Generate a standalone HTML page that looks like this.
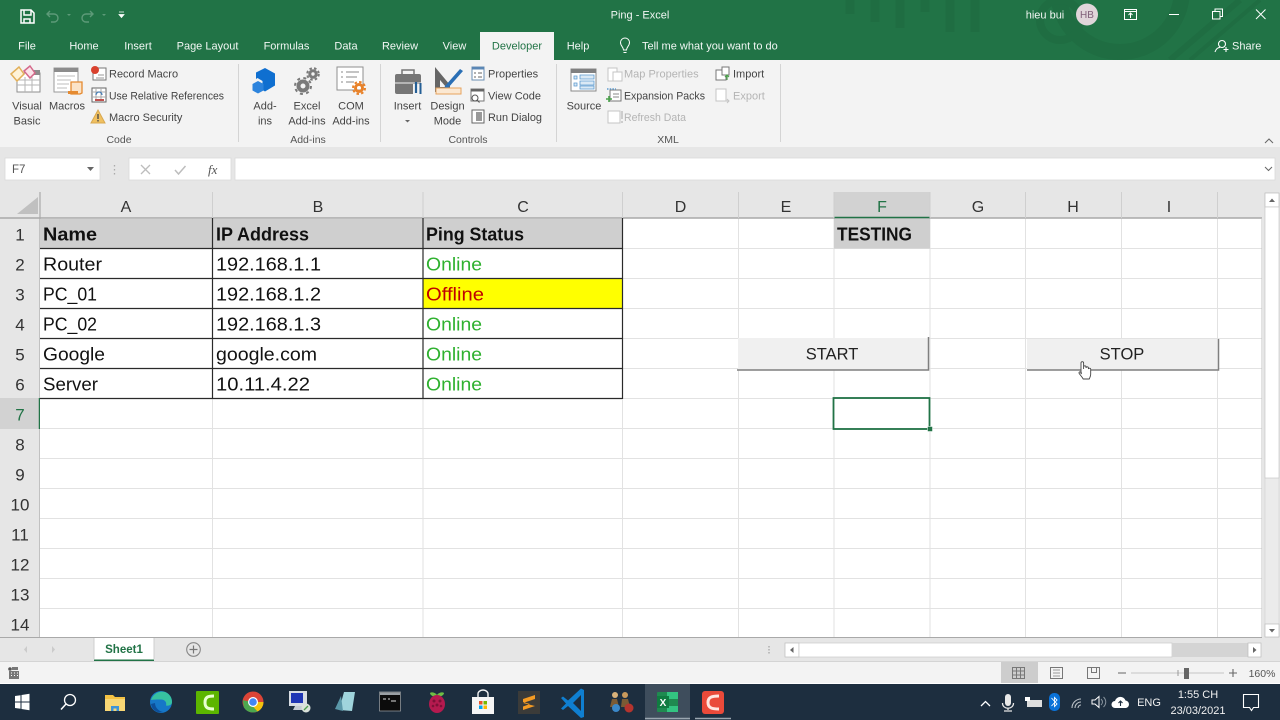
<!DOCTYPE html>
<html><head><meta charset="utf-8"><title>Ping - Excel</title>
<style>
html,body{margin:0;padding:0;width:1280px;height:720px;overflow:hidden;background:#fff}
svg{display:block;font-family:"Liberation Sans",sans-serif}
.r{font-size:11px;fill:#444}
.d{font-size:11px;fill:#b4b4b4}
.w{font-size:11px;fill:#f2f7f4}
.m{text-anchor:middle}
.g{font-size:10.5px;fill:#555;text-anchor:middle}
.h{font-size:16px;fill:#333;text-anchor:middle}
.n{font-size:17px;fill:#333;text-anchor:middle}
.c{font-size:18px;fill:#111}
.b{font-weight:bold}
.on{fill:#2fb12f}
.l{stroke:#e2e2e2;stroke-width:1}
.k{stroke:#2a2a2a;stroke-width:1.200}
</style></head><body>
<svg width="1280" height="720" viewBox="0 0 1280 720" xmlns="http://www.w3.org/2000/svg">
<!-- title bar -->
<rect width="1280" height="60" fill="#217346"/>
<g fill="none" stroke="#1f6d42" stroke-width="16">
<circle cx="1120" cy="-10" r="62"/><circle cx="1060" cy="20" r="20" stroke-width="8"/>
<path d="M850 0v14M875 0v22M900 0v28M925 0v12M950 0v32M975 0v32" stroke-width="9"/>
<path d="M1170 60L1240 0" stroke-width="6"/><path d="M1190 60L1260 0" stroke-width="4"/>
</g>
<!-- qat -->
<g fill="none" stroke="#fff" stroke-width="1.500"><path d="M21 10h10l3 3v10H21z"/><path d="M24 10v5h7v-5M24 23v-4h6v4"/></g>
<g fill="none" stroke="#5d9a78" stroke-width="1.400"><path d="M50 11l-3 3 3 3M47 14h7a4 4 0 0 1 0 8h-3"/><path d="M90 11l3 3-3 3M93 14h-7a4 4 0 0 0 0 8h3"/></g>
<path d="M67 14h4l-2 2zM102 14h4l-2 2z" fill="#5d9a78"/>
<path d="M119 12h5M119 14.500h5l-2.500 3z" fill="#fff" stroke="#fff" stroke-width=".8"/>
<text x="640" y="18.500" class="w m">Ping  -  Excel</text>
<text x="1045" y="18.500" class="w m">hieu bui</text>
<circle cx="1087" cy="14.500" r="11" fill="#e0d6da"/><text x="1087" y="18" font-size="10" fill="#80607a" text-anchor="middle">HB</text>
<g fill="none" stroke="#fff" stroke-width="1"><path d="M1124.500 9.500h12v10h-12zM1124.500 11.500h12M1130.500 18v-5M1128.500 15l2-2 2 2"/><path d="M1169 14.500h10"/><path d="M1212.500 11.500h7.500v7.500h-7.500zM1215 11.500v-2.500h7.500v7.500h-2.500"/><path d="M1256 9.500l9.500 9.500M1265.500 9.500l-9.500 9.500"/></g>
<!-- tabs -->
<rect x="480" y="32" width="74" height="28" fill="#f3f3f3"/>
<text x="27" y="49.500" class="w m">File</text><text x="84" y="49.500" class="w m">Home</text><text x="138" y="49.500" class="w m">Insert</text><text x="207.500" y="49.500" class="w m">Page Layout</text><text x="286.500" y="49.500" class="w m">Formulas</text><text x="346" y="49.500" class="w m">Data</text><text x="400" y="49.500" class="w m">Review</text><text x="454.500" y="49.500" class="w m">View</text>
<text x="517" y="49.500" class="m" font-size="11" fill="#217346">Developer</text>
<text x="578" y="49.500" class="w m">Help</text>
<path d="M623.500 50c0-3-3-4-3-7.500a4.500 4.500 0 0 1 9 0c0 3.500-3 4.500-3 7.500zM623.500 52.500h3" fill="none" stroke="#fff"/>
<text x="642" y="49.500" class="w">Tell me what you want to do</text>
<g fill="none" stroke="#fff" stroke-width="1.100"><circle cx="1222" cy="44" r="3.500"/><path d="M1215 52c1-3 3-4.500 5-4.500M1226 47v5M1223.500 49.500h5"/></g>
<text x="1232" y="49.500" class="w">Share</text>
<!-- ribbon -->
<rect y="60" width="1280" height="87" fill="#f3f3f3"/>
<rect y="147" width="1280" height="45" fill="#e6e6e6"/>
<g stroke="#d4d4d4"><path d="M238.500 64v78M380.500 64v78M556.500 64v78M780.500 64v78"/></g>
<path d="M1265 143l4-4 4 4" fill="none" stroke="#666"/>
<!-- Visual basic -->
<rect x="17" y="73" width="23" height="19" fill="#fff" stroke="#8f8f8f"/><rect x="30" y="70" width="10" height="5" fill="#8c8c8c"/>
<path d="M17 80h23M17 85h23M25 77v15M32 77v15" stroke="#b5b5b5"/>
<path d="M19 67l5 7-7 7-6-7z" fill="#fff3d8" stroke="#e2b05a" stroke-width="1.500"/><path d="M30 66l5 7-5 5-6-7z" fill="#fbe4ea" stroke="#d4688a" stroke-width="1.500"/>
<text x="27" y="109.500" class="r m">Visual</text><text x="27" y="124.500" class="r m">Basic</text>
<!-- Macros -->
<rect x="54" y="68" width="24" height="24" fill="#fff" stroke="#9a9a9a"/><rect x="54" y="68" width="24" height="4" fill="#8c8c8c"/>
<path d="M57 76h18M57 80h14M57 84h12M57 88h10" stroke="#bdbdbd"/>
<path d="M71 82h11v11l-2 1h-9z" fill="#fbe3c8" stroke="#e58a30" stroke-width="1.300"/><path d="M68 91h10v3h-10z" fill="#e58a30"/>
<text x="67" y="109.500" class="r m">Macros</text>
<!-- Record etc -->
<rect x="93" y="68" width="13" height="12" fill="#fff" stroke="#777"/><circle cx="95" cy="70" r="4" fill="#d9412e"/><path d="M98 75h6M96 78h8" stroke="#999"/>
<text x="109" y="77.500" class="r">Record Macro</text>
<rect x="92" y="88" width="14" height="14" fill="#fff" stroke="#666"/><path d="M92 92h14M92 97h14M96 88v14M101 88v14" stroke="#aaa"/><path d="M95 100h9" stroke="#c0504d" stroke-width="2"/><path d="M96 95a3 3 0 0 1 6 0" fill="none" stroke="#4a7fb5" stroke-width="1.300"/>
<text x="109" y="99.500" class="r" textLength="115" lengthAdjust="spacingAndGlyphs">Use Relative References</text>
<path d="M98 110l7 13H91z" fill="#f0c060" stroke="#d8a850"/><path d="M98 114v5M98 120v1.500" stroke="#444" stroke-width="1.300"/>
<text x="109" y="121" class="r">Macro Security</text>
<text x="119" y="143" class="g">Code</text>
<!-- Add-ins -->
<path d="M265 68l10 5.500v12l-10 6-2.500-1.500v-9l-5-3-1.500 1v-6.500z" fill="#0f6fd0"/><path d="M258 81l5.500 3v6.500l-5.500 3-5.500-3V84z" fill="#2d84dd"/>
<text x="265" y="109.500" class="r m">Add-</text><text x="265" y="124.500" class="r m">ins</text>
<g fill="none" stroke="#7a7a7a"><circle cx="303" cy="86" r="4.500" stroke-width="4"/><circle cx="303" cy="86" r="8" stroke-width="2" stroke-dasharray="3 3.300"/><circle cx="313" cy="74" r="3.200" stroke-width="3"/><circle cx="313" cy="74" r="5.800" stroke-width="2" stroke-dasharray="2.500 2.200"/></g>
<text x="307" y="109.500" class="r m">Excel</text><text x="307" y="124.500" class="r m">Add-ins</text>
<rect x="337" y="67" width="26" height="23" fill="#fff" stroke="#8f8f8f"/><path d="M341 72h2M346 72h13M341 77h2M346 77h11M341 82h2M346 82h8" stroke="#888"/>
<circle cx="359" cy="88" r="3.500" fill="none" stroke="#e8822a" stroke-width="3"/><circle cx="359" cy="88" r="6" fill="none" stroke="#e8822a" stroke-width="2" stroke-dasharray="2.500 2.200"/>
<text x="351" y="109.500" class="r m">COM</text><text x="351" y="124.500" class="r m">Add-ins</text>
<text x="308" y="143" class="g">Add-ins</text>
<!-- Insert -->
<rect x="395" y="74" width="26" height="20" rx="2" fill="#767676"/><path d="M402 74v-4h12v4" fill="none" stroke="#767676" stroke-width="1.500"/><path d="M395 83h26" stroke="#f3f3f3"/>
<path d="M415 84v11M419 84v11" stroke="#f3f3f3" stroke-width="4"/><path d="M416 82v11" stroke="#245f96" stroke-width="2.200"/><path d="M420.500 83v11" stroke="#245f96" stroke-width="2"/>
<text x="407.500" y="109.500" class="r m">Insert</text><path d="M405 120h5l-2.500 2.500z" fill="#666"/>
<!-- Design -->
<path d="M435 67l15 18v-3 10h-15z" fill="#666"/><path d="M440 80l6 7h-6z" fill="#f3f3f3"/>
<path d="M445 86l15-17 3 2-15 17-4 1z" fill="#2a6fb5"/>
<rect x="436" y="88" width="25" height="6" fill="#fbe8d2" stroke="#e7a35e"/>
<text x="447.500" y="109.500" class="r m">Design</text><text x="447.500" y="124.500" class="r m">Mode</text>
<!-- controls small -->
<rect x="472" y="67" width="12" height="13" fill="#fff" stroke="#6b8fb3"/><rect x="472" y="67" width="12" height="2.500" fill="#5b87b5"/><path d="M474 73h2M478 73h4M474 77h2M478 77h4" stroke="#666"/>
<text x="488" y="77.500" class="r">Properties</text>
<rect x="471" y="89" width="13" height="12" fill="#fff" stroke="#777"/><rect x="471" y="89" width="13" height="2.500" fill="#666"/><circle cx="475" cy="98" r="3" fill="#fff" stroke="#555"/><path d="M477 100l2.500 2.500" stroke="#555"/>
<text x="488" y="99.500" class="r" textLength="53" lengthAdjust="spacingAndGlyphs">View Code</text>
<rect x="472" y="110" width="12" height="13" fill="#fff" stroke="#666"/><rect x="476" y="112" width="6" height="9" fill="#999"/>
<text x="488" y="121" class="r" textLength="54" lengthAdjust="spacingAndGlyphs">Run Dialog</text>
<text x="468" y="143" class="g">Controls</text>
<!-- XML -->
<rect x="571" y="69" width="25" height="22" fill="#fff" stroke="#8a8a8a"/><rect x="571" y="69" width="25" height="4" fill="#808080"/>
<path d="M574 76h3v3h-3zM574 83h3v3h-3zM580 75h14v4h-14zM580 81h14v4h-14zM580 86h14v3h-14z" fill="#dbe9f5" stroke="#5e9bcf" stroke-width=".8"/>
<text x="584" y="109.500" class="r m">Source</text>
<g stroke="#c4c4c4" fill="#fff"><rect x="608" y="68" width="9" height="13"/><rect x="613" y="72" width="9" height="9"/></g>
<text x="624" y="77.500" class="d">Map Properties</text>
<rect x="610" y="90" width="11" height="11" fill="#fff" stroke="#777"/><path d="M607 89h9" stroke="#5e9bcf" stroke-width="1.500" stroke-dasharray="1.500 1.200"/><path d="M606 99h6M609 96v6" stroke="#4aa24a" stroke-width="1.600"/><path d="M613 94h6M613 97h6" stroke="#888"/>
<text x="624" y="99.500" class="r" textLength="81" lengthAdjust="spacingAndGlyphs">Expansion Packs</text>
<rect x="608" y="111" width="12" height="12" fill="#fff" stroke="#c4c4c4"/><path d="M622 111v8M622 121v2" stroke="#c4c4c4" stroke-width="1.600"/>
<text x="624" y="121" class="d" textLength="62" lengthAdjust="spacingAndGlyphs">Refresh Data</text>
<rect x="716" y="70" width="10" height="10" fill="#fff" stroke="#777"/><rect x="722" y="67" width="7" height="8" fill="#fff" stroke="#777"/><path d="M727 80v-5M725 77l2-2 2 2" fill="none" stroke="#4aa24a" stroke-width="1.200"/>
<text x="733" y="77.500" class="r">Import</text>
<rect x="716" y="89" width="10" height="12" fill="#fff" stroke="#c4c4c4"/><path d="M724 101h5M727 99l2 2-2 2" fill="none" stroke="#c4c4c4"/>
<text x="733" y="99.500" class="d">Export</text>
<text x="668" y="143" class="g">XML</text>
<!-- formula bar -->
<rect x="5" y="158" width="95" height="22" fill="#fff" stroke="#dadada" stroke-width=".8"/>
<text x="12" y="173" font-size="11.500" fill="#555">F7</text><path d="M87 167h7l-3.500 4z" fill="#666"/>
<path d="M114.500 165v1.500M114.500 169v1.500M114.500 173v1.500" stroke="#aaa" stroke-width="1.300"/>
<rect x="129" y="158" width="102" height="22" fill="#fff" stroke="#dadada" stroke-width=".8"/>
<path d="M141 165l9 9M150 165l-9 9" stroke="#bdbdbd" stroke-width="1.300"/><path d="M175 170l3.500 4 7-8" fill="none" stroke="#bdbdbd" stroke-width="1.500"/>
<text x="208" y="174" font-family="Liberation Serif" font-style="italic" font-size="13" fill="#555">fx</text>
<rect x="235" y="158" width="1040" height="22" fill="#fff" stroke="#dadada" stroke-width=".8"/>
<path d="M1265 167l3.500 3.500 3.500-3.500" fill="none" stroke="#666"/>
<!-- headers -->
<rect x="0" y="192" width="1262" height="26" fill="#e6e6e6"/>
<rect x="0" y="218" width="40" height="420" fill="#e6e6e6"/>
<rect x="834" y="192" width="96" height="26" fill="#d2d2d2"/>
<rect x="0" y="398" width="40" height="31" fill="#d2d2d2"/>
<path d="M38 197v17H17z" fill="#c0c0c0"/>
<path d="M0 218h1262" stroke="#a9a9a9" stroke-width="1.500"/><path d="M40 192v446" stroke="#a9a9a9" stroke-width="1.200"/>
<path d="M834 217.500h96" stroke="#217346" stroke-width="1.500"/>
<path d="M39.500 398v31" stroke="#217346" stroke-width="1.500"/>
<g stroke="#cfcfcf"><path d="M212.500 192v26M423 192v26M622.500 192v26M738.500 192v26M834 192v26M930 192v26M1025.500 192v26M1121.500 192v26M1217.500 192v26"/></g>
<text x="126" y="212" class="h">A</text><text x="318" y="212" class="h">B</text><text x="523" y="212" class="h">C</text><text x="680.500" y="212" class="h">D</text><text x="786" y="212" class="h">E</text><text x="882" y="212" class="h" style="fill:#217346">F</text><text x="978" y="212" class="h">G</text><text x="1073" y="212" class="h">H</text><text x="1169" y="212" class="h">I</text>
<text x="20" y="240.500" class="n">1</text><text x="20" y="270.500" class="n">2</text><text x="20" y="300.500" class="n">3</text><text x="20" y="330.500" class="n">4</text><text x="20" y="360.500" class="n">5</text><text x="20" y="390.500" class="n">6</text><text x="20" y="420.500" class="n" style="fill:#217346">7</text><text x="20" y="450.500" class="n">8</text><text x="20" y="480.500" class="n">9</text><text x="20" y="510.500" class="n">10</text><text x="20" y="540.500" class="n">11</text><text x="20" y="570.500" class="n">12</text><text x="20" y="600.500" class="n">13</text><text x="20" y="630.500" class="n">14</text>
<!-- grid -->
<rect x="40" y="219" width="1222" height="419" fill="#fff"/>
<g class="l"><path d="M40 248.500h1222M40 278.500h1222M40 308.500h1222M40 338.500h1222M40 368.500h1222M40 398.500h1222M40 428.500h1222M40 458.500h1222M40 488.500h1222M40 518.500h1222M40 548.500h1222M40 578.500h1222M40 608.500h1222"/>
<path d="M212.500 219v419M423 219v419M622.500 219v419M738.500 219v419M834 219v419M930 219v419M1025.500 219v419M1121.500 219v419M1217.500 219v419"/></g>
<path d="M1262 218v420" stroke="#c4c4c4"/>
<rect x="40" y="219" width="582" height="29.500" fill="#cfcfcf"/>
<rect x="834" y="219" width="96" height="29.500" fill="#cfcfcf"/>
<rect x="423" y="279" width="199" height="29.500" fill="#ffff00"/>
<g class="k"><path d="M40 248.500h582M40 278.500h582M40 308.500h582M40 338.500h582M40 368.500h582M40 398.500h582M212.500 218v181M423 218v181M622.500 218v181"/></g>
<path d="M0 637.500h1262" stroke="#a9a9a9"/>
<!-- cell text -->
<g class="c">
<text x="43" y="240.500" class="b" textLength="54" lengthAdjust="spacingAndGlyphs">Name</text>
<text x="216" y="240.500" class="b" textLength="93" lengthAdjust="spacingAndGlyphs">IP Address</text>
<text x="426" y="240.500" class="b" textLength="98" lengthAdjust="spacingAndGlyphs">Ping Status</text>
<text x="43" y="270.500" textLength="59" lengthAdjust="spacingAndGlyphs">Router</text>
<text x="43" y="300.500" textLength="54" lengthAdjust="spacingAndGlyphs">PC_01</text>
<text x="43" y="330.500" textLength="54" lengthAdjust="spacingAndGlyphs">PC_02</text>
<text x="43" y="360.500" textLength="62" lengthAdjust="spacingAndGlyphs">Google</text>
<text x="43" y="390.500" textLength="55" lengthAdjust="spacingAndGlyphs">Server</text>
<text x="216" y="270.500" textLength="105" lengthAdjust="spacingAndGlyphs">192.168.1.1</text>
<text x="216" y="300.500" textLength="105" lengthAdjust="spacingAndGlyphs">192.168.1.2</text>
<text x="216" y="330.500" textLength="105" lengthAdjust="spacingAndGlyphs">192.168.1.3</text>
<text x="216" y="360.500" textLength="101" lengthAdjust="spacingAndGlyphs">google.com</text>
<text x="216" y="390.500" textLength="94" lengthAdjust="spacingAndGlyphs">10.11.4.22</text>
<text x="426" y="270.500" class="on" textLength="56" lengthAdjust="spacingAndGlyphs">Online</text>
<text x="426" y="300.500" style="fill:#c00000" textLength="58" lengthAdjust="spacingAndGlyphs">Offline</text>
<text x="426" y="330.500" class="on" textLength="56" lengthAdjust="spacingAndGlyphs">Online</text>
<text x="426" y="360.500" class="on" textLength="56" lengthAdjust="spacingAndGlyphs">Online</text>
<text x="426" y="390.500" class="on" textLength="56" lengthAdjust="spacingAndGlyphs">Online</text>
<text x="837" y="240.500" class="b" textLength="75" lengthAdjust="spacingAndGlyphs">TESTING</text>
</g>
<!-- buttons -->
<rect x="738" y="338" width="190" height="32" fill="#f0f0f0"/>
<path d="M737 370h191.500V337" fill="none" stroke="#7f7f7f" stroke-width="1.500"/>
<text x="832" y="359.500" font-size="16.500" fill="#222" text-anchor="middle">START</text>
<rect x="1027" y="339" width="191" height="31" fill="#f0f0f0"/>
<path d="M1027 370h191.500V339" fill="none" stroke="#7f7f7f" stroke-width="1.500"/>
<text x="1122" y="359.500" font-size="16.500" fill="#222" text-anchor="middle">STOP</text>
<!-- cursor -->
<path d="M1081 374v-11a1.300 1.300 0 0 1 2.600 0v6v-2a1.200 1.200 0 0 1 2.400 0v1a1.200 1.200 0 0 1 2.400 0v1a1.200 1.200 0 0 1 2.300 0v5c0 2-1 4-1.500 5h-6c-1-2-3-4-4-5.500-.800-1.500 1-2.500 2.300-.5z" fill="#fff" stroke="#444" stroke-width=".9"/>
<!-- selection -->
<rect x="833.500" y="398" width="96" height="31" fill="none" stroke="#217346" stroke-width="1.800"/>
<rect x="927.500" y="426.500" width="5" height="5" fill="#217346" stroke="#fff" stroke-width=".5"/>
<!-- v scrollbar -->
<rect x="1262" y="192" width="18" height="446" fill="#e6e6e6"/>
<rect x="1265" y="193" width="14" height="444" fill="#ebebeb" stroke="#d0d0d0" stroke-width=".6"/>
<rect x="1265" y="193" width="14" height="14" fill="#fff" stroke="#bbb" stroke-width=".7"/>
<path d="M1269 202l3-3.500 3 3.500z" fill="#666"/>
<rect x="1265" y="207" width="14" height="271" fill="#fff" stroke="#c8c8c8" stroke-width=".7"/>
<rect x="1265" y="624" width="14" height="13" fill="#fff" stroke="#bbb" stroke-width=".7"/>
<path d="M1269 629h6l-3 3.500z" fill="#666"/>
<!-- sheet tabs -->
<rect y="638" width="1280" height="24" fill="#e6e6e6"/>
<path d="M27 646v7l-3-3.500zM52 646v7l3-3.500z" fill="#cbcbcb"/>
<rect x="94" y="638" width="60" height="23" fill="#fff"/><rect x="94" y="659.500" width="60" height="2" fill="#217346"/>
<path d="M94 638v21M154 638v21" stroke="#cfcfcf"/>
<text x="124" y="653" font-size="11.500" font-weight="bold" fill="#217346" text-anchor="middle">Sheet1</text>
<circle cx="193.500" cy="649.500" r="6.800" fill="none" stroke="#888" stroke-width="1.100"/><path d="M193.500 645.500v8M189.500 649.500h8" stroke="#777" stroke-width="1.200"/>
<path d="M769 646v1.500M769 649v1.500M769 652v1.500" stroke="#aaa" stroke-width="1.400"/>
<rect x="785" y="643" width="14" height="14" fill="#fff" stroke="#bbb" stroke-width=".7"/><path d="M793.500 647v6l-3.500-3z" fill="#666"/>
<rect x="799" y="643" width="373" height="14" fill="#fff" stroke="#c8c8c8" stroke-width=".7"/>
<rect x="1172" y="643" width="76" height="14" fill="#d4d4d4"/>
<rect x="1248" y="643" width="13" height="14" fill="#fff" stroke="#bbb" stroke-width=".7"/><path d="M1253 647v6l3.500-3z" fill="#666"/>
<!-- status -->
<rect y="662" width="1280" height="21" fill="#f3f3f3"/>
<path d="M0 661.500h1280" stroke="#d4d4d4"/>
<circle cx="10" cy="669" r="1.800" fill="#555"/><rect x="9" y="671" width="10" height="8" fill="#777"/><path d="M11 673h1M14 673h1M17 673h1M11 675.500h1M14 675.500h1M17 675.500h1" stroke="#fff"/><rect x="12" y="667" width="6" height="3" fill="#777"/>
<rect x="1001" y="662" width="37" height="21" fill="#cdcdcd"/>
<g fill="none" stroke="#777"><path d="M1012.500 667.500h12v11h-12zM1016.500 667.500v11M1020.500 667.500v11M1012.500 671h12M1012.500 675h12"/>
<rect x="1050.500" y="667.500" width="12" height="11"/><path d="M1053 670h7M1053 673h7M1053 676h7" stroke="#999"/>
<path d="M1087.500 667.500h12v11h-12zM1091.500 667.500v5h5v-5"/></g>
<path d="M1118 673h8M1229 673h8M1233 669v8" stroke="#666" stroke-width="1.100"/>
<path d="M1131 673h93" stroke="#c4c4c4"/><path d="M1178 670v6" stroke="#999"/>
<rect x="1184" y="668" width="5" height="11" fill="#666"/>
<text x="1262" y="677" font-size="10.500" fill="#555" text-anchor="middle">160%</text>
<!-- taskbar -->
<rect y="684" width="1280" height="36" fill="#1d2e3f"/>
<rect x="645" y="684" width="45" height="36" fill="#3e4d5c"/>
<path d="M645 718.500h45M695 718.500h36" stroke="#9aa6b0" stroke-width="1.500"/>
<!-- start -->
<path d="M15 696l5.500-.8v6.300H15zM21.500 695l8-1.200v7.700h-8zM15 702.500h5.500v6.300L15 708zM21.500 702.500h8v7.700l-8-1.200z" fill="#fff"/>
<circle cx="70" cy="700" r="5.500" fill="none" stroke="#fff" stroke-width="1.300"/><path d="M66 704l-5 5.500" stroke="#fff" stroke-width="1.500"/>
<!-- folder -->
<path d="M105 695h8l2 2h10v14h-20z" fill="#f3c244"/><path d="M105 699h20v12h-20z" fill="#f8d775"/><path d="M111 711v-5h8v5h-2.500v-2.500h-3v2.500z" fill="#3f94d8"/>
<!-- edge -->
<circle cx="161" cy="702" r="11" fill="#1677c8"/><path d="M151 700c2-7 9-9.500 14-8 4 1.500 7 5 7 10 0 3-3 4-6 3.500 1-3-1-6-5-6-4 0-8 0-10 .5z" fill="#37c1a0"/><path d="M155 703c0 4 3 8 8 9-6 1.500-11-2-12-8z" fill="#0d4f9a"/>
<!-- camtasia -->
<rect x="196" y="691" width="23" height="23" rx="1" fill="#5cb500"/><path d="M214 696c-6 0-9 1-9 6.500s3 6.500 9 6.500" fill="none" stroke="#e8ffd0" stroke-width="3"/>
<!-- chrome -->
<circle cx="253" cy="702" r="10.500" fill="#db4437"/><path d="M253 702l9 5.200a10.500 10.500 0 0 1-18.200 0l-1-7z" fill="#4ca84f"/><path d="M253 702h10.500a10.500 10.500 0 0 1-6 9.500l-4.500-5z" fill="#f4c20d"/><circle cx="253" cy="702" r="5" fill="#fff"/><circle cx="253" cy="702" r="3.800" fill="#4285f4"/>
<!-- monitor -->
<rect x="289" y="691" width="18" height="15" fill="#d8dde3"/><rect x="291" y="693" width="12" height="10" fill="#1f36b5"/><path d="M295 706h12v4h-14z" fill="#c5ccd3"/><circle cx="306" cy="708" r="4.500" fill="#dbe2da"/><path d="M304 710l4-4" stroke="#4f9f4f" stroke-width="1.300"/>
<!-- notepad -->
<path d="M339 710l5-18h11l-3 19z" fill="#9fd4dc"/><path d="M335 709l6-13 2 15z" fill="#5a97a8"/>
<!-- cmd -->
<rect x="379.500" y="692" width="21" height="19" fill="#0c0c0c" stroke="#8f9499" stroke-width=".8"/><rect x="380" y="692.500" width="20" height="2.500" fill="#9aa0a5"/><path d="M383 699h3M388 699h2M391 701h5" stroke="#ddd"/>
<!-- raspberry -->
<path d="M437 695c-2-3-6-3-7-2 0 2 3 4 7 4 4 0 7-2 7-4-1-1-5-1-7 2z" fill="#6fbe45"/><ellipse cx="437" cy="704" rx="8" ry="9" fill="#b51a4f"/><circle cx="434" cy="701" r="1.500" fill="#7e1037"/><circle cx="440" cy="701" r="1.500" fill="#7e1037"/><circle cx="437" cy="705" r="1.500" fill="#7e1037"/><circle cx="433" cy="706" r="1.300" fill="#7e1037"/><circle cx="441" cy="706" r="1.300" fill="#7e1037"/>
<!-- store -->
<rect x="472" y="697" width="22" height="17" fill="#f5f5f5"/><path d="M478 697v-3a5 4 0 0 1 10 0v3" fill="none" stroke="#f5f5f5" stroke-width="1.400"/>
<rect x="479" y="701" width="3.500" height="3.500" fill="#e8552c"/><rect x="483.500" y="701" width="3.500" height="3.500" fill="#77b900"/><rect x="479" y="705.500" width="3.500" height="3.500" fill="#00a4ef"/><rect x="483.500" y="705.500" width="3.500" height="3.500" fill="#ffb900"/>
<!-- sublime -->
<rect x="518" y="691" width="22" height="23" fill="#3b3b39"/><path d="M523 699l12-4v4l-12 4zM523 703l12 3v0l-12 4v-3.500l7-2.500-7-2z" fill="#f59b23"/>
<!-- vscode -->
<path d="M581 691l-13 12-5-4-2 1.500 5 5.500-5 5 2 1.500 5-4 13 12 3-1v-27z" fill="#0f7fd1" transform="translate(0 -2.500)"/><path d="M581 695v16l-8-8z" fill="#1d2e3f"/>
<!-- people -->
<circle cx="615" cy="695" r="3" fill="#d9b27a"/><circle cx="625" cy="695" r="3" fill="#c99a5c"/><path d="M610 707l2-8h5l2 8zM621 707l1-8h6l2 8z" fill="#7b5b35"/><circle cx="616" cy="708" r="4" fill="#3b88c9"/><circle cx="629" cy="708" r="4.500" fill="#b5342e"/>
<!-- excel -->
<rect x="657" y="692" width="21" height="20" rx="1" fill="#1f8a50"/><path d="M667 692h11v7h-11zM667 706h11v6h-11z" fill="#33c481"/><rect x="657" y="696" width="12" height="12" fill="#107c41"/><text x="663" y="706" font-size="10" font-weight="bold" fill="#fff" text-anchor="middle">X</text>
<!-- camtasia red -->
<rect x="702" y="691" width="22" height="23" rx="3" fill="#ea4a3a"/><path d="M719 696c-7 0-11 1-11 6.500s4 6.500 11 6.500" fill="none" stroke="#ffe5e0" stroke-width="3"/>
<!-- tray -->
<path d="M981 706l4.500-4.500 4.500 4.500" fill="none" stroke="#fff" stroke-width="1.300"/>
<rect x="1005" y="694" width="6" height="12" rx="3" fill="#e8e8e8"/><path d="M1002.500 703c0 7 11 7 11 0M1008 708v2M1004 711h8" fill="none" stroke="#e8e8e8" stroke-width="1.300"/>
<rect x="1027" y="700" width="15" height="7" fill="#ddd"/><rect x="1025" y="697" width="5" height="4" fill="#fff"/>
<rect x="1049" y="693" width="11" height="18" rx="5" fill="#0a72d8"/><path d="M1051.500 698l5.500 6-2.500 2.500v-9l2.500 2.500-5.500 6" fill="none" stroke="#fff" stroke-width=".9"/>
<g fill="none" stroke="#bcc3c9" stroke-width="1.100"><path d="M1072 708a9 9 0 0 1 9-9M1075 708a6 6 0 0 1 6-6M1078 708a3 3 0 0 1 3-3"/></g>
<path d="M1092 700h3l4-3.500v11l-4-3.500h-3z" fill="none" stroke="#fff"/><path d="M1101 699c2 2 2 4 0 6M1103.500 697c3 3 3 7 0 10" fill="none" stroke="#8a959f"/>
<path d="M1115 708a3.500 3.500 0 0 1 0-7 5.500 5.500 0 0 1 10.500-.5 3.800 3.800 0 0 1 .5 7.500z" fill="#fff"/><path d="M1120.500 706v-5M1118.500 703l2-2 2 2" fill="none" stroke="#1d2e3f" stroke-width="1.100"/>
<text x="1149" y="706" font-size="11" fill="#f0f0f0" text-anchor="middle">ENG</text>
<text x="1198" y="698" font-size="11" fill="#f0f0f0" text-anchor="middle">1:55 CH</text>
<text x="1198" y="714" font-size="11" fill="#f0f0f0" text-anchor="middle">23/03/2021</text>
<path d="M1243.500 694.500h15v13h-5l-2 3-2-3h-6z" fill="none" stroke="#fff" stroke-width="1.100"/>
</svg>
</body></html>
